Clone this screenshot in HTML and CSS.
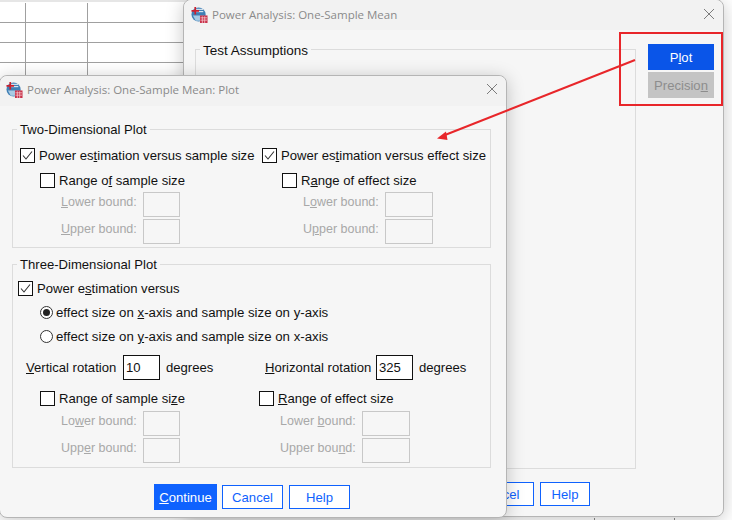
FILE: index.html
```html
<!DOCTYPE html>
<html lang="en">
<head>
    <meta charset="UTF-8">
    <title>Power Analysis: One-Sample Mean: Plot</title>
    <link rel="stylesheet" href="styles.css">
</head>
<body>
    <div class="sheet">
        <div class="sheet-row"><i></i><i></i></div>
        <div class="sheet-row"><i></i><i></i></div>
        <div class="sheet-row"><i></i><i></i></div>
        <div class="sheet-row"><i></i><i></i></div>
    </div>
    <div class="sheet-foot"><i></i><i></i></div>

    <!-- dialog behind -->
    <div class="dialog dialog-back">
        <div class="titlebar">
            <svg class="app-icon" viewBox="0 0 18 18"><use href="#spss"/></svg>
            <span class="title">Power Analysis: One-Sample Mean</span>
            <svg class="close" viewBox="0 0 12 12"><path d="M1 1l10 10M11 1L1 11"/></svg>
        </div>
        <div class="back-body">
            <div class="back-main">
                <div class="group back-group">
                    <span class="legend">Test Assumptions</span>
                </div>
            </div>
            <div class="side-buttons">
                <button class="btn btn-primary btn-side">P<u>l</u>ot</button>
                <button class="btn btn-off btn-side">Precisio<u>n</u></button>
            </div>
        </div>
        <div class="back-footer">
            <button class="btn btn-outline btn-cancel-back">Cancel</button>
            <button class="btn btn-outline btn-help-back">Help</button>
        </div>
    </div>

    <!-- plot dialog -->
    <div class="dialog dialog-front">
        <div class="titlebar">
            <svg class="app-icon" viewBox="0 0 18 18">
                <defs>
                    <g id="spss">
                        <circle cx="8" cy="9" r="7.5" fill="#3f7fb5"/>
                        <path d="M2 10h12v5.5H5z" fill="#a9cbe4"/>
                        <path d="M5 3.5h8M5 6h8" stroke="#fff" stroke-width="1"/>
                        <path d="M0.5 5.2h8M4.5 1v8" stroke="#c8202f" stroke-width="1.8"/>
                        <rect x="9.5" y="10" width="8" height="8" fill="#c8324a"/>
                        <path d="M10 12.5h7M10 15h7M12 11v7M14.5 11v7" stroke="#f4c8cf" stroke-width="0.8"/>
                    </g>
                </defs>
                <use href="#spss"/>
            </svg>
            <span class="title">Power Analysis: One-Sample Mean: Plot</span>
            <svg class="close" viewBox="0 0 12 12"><path d="M1 1l10 10M11 1L1 11"/></svg>
        </div>
        <div class="plot-body">
            <div class="group group-2d">
                <span class="legend">Two-Dimensional Plot</span>
                <div class="cols">
                    <div class="col col-a">
                        <label class="check"><span class="box"><svg viewBox="0 0 13 13"><path d="M2 6.5l3 3.5 6-7.5"/></svg></span><span>Power es<u>t</u>imation versus sample size</span></label>
                        <label class="check sub"><span class="box"></span><span>Range o<u>f</u> sample size</span></label>
                        <div class="bound"><span class="muted"><u>L</u>ower bound:</span><span class="field"></span></div>
                        <div class="bound"><span class="muted"><u>U</u>pper bound:</span><span class="field"></span></div>
                    </div>
                    <div class="col col-b">
                        <label class="check"><span class="box"><svg viewBox="0 0 13 13"><path d="M2 6.5l3 3.5 6-7.5"/></svg></span><span>Power es<u>t</u>imation versus effect size</span></label>
                        <label class="check sub"><span class="box"></span><span>R<u>a</u>nge of effect size</span></label>
                        <div class="bound"><span class="muted">L<u>o</u>wer bound:</span><span class="field wide"></span></div>
                        <div class="bound"><span class="muted">U<u>p</u>per bound:</span><span class="field wide"></span></div>
                    </div>
                </div>
            </div>

            <div class="group group-3d">
                <span class="legend">Three-Dimensional Plot</span>
                <label class="check"><span class="box"><svg viewBox="0 0 13 13"><path d="M2 6.5l3 3.5 6-7.5"/></svg></span><span>Power e<u>s</u>timation versus</span></label>
                <label class="radio"><span class="dot on"></span><span>effect size on <u>x</u>-axis and sample size on y-axis</span></label>
                <label class="radio"><span class="dot"></span><span>effect size on <u>y</u>-axis and sample size on x-axis</span></label>
                <div class="rotation">
                    <div class="rot rot-v"><span class="rot-label"><u>V</u>ertical rotation</span><span class="field solid">10</span><span class="rot-unit">degrees</span></div>
                    <div class="rot rot-h"><span class="rot-label"><u>H</u>orizontal rotation</span><span class="field solid">325</span><span class="rot-unit">degrees</span></div>
                </div>
                <div class="cols cols-3d">
                    <div class="col col-c">
                        <label class="check sub"><span class="box"></span><span>Range of sample si<u>z</u>e</span></label>
                        <div class="bound"><span class="muted">Lo<u>w</u>er bound:</span><span class="field"></span></div>
                        <div class="bound"><span class="muted">Upp<u>e</u>r bound:</span><span class="field"></span></div>
                    </div>
                    <div class="col col-d">
                        <label class="check sub"><span class="box"></span><span><u>R</u>ange of effect size</span></label>
                        <div class="bound"><span class="muted">Lower <u>b</u>ound:</span><span class="field wide"></span></div>
                        <div class="bound"><span class="muted">Upper bou<u>n</u>d:</span><span class="field wide"></span></div>
                    </div>
                </div>
            </div>

            <div class="footer">
                <button class="btn btn-primary btn-continue"><u>C</u>ontinue</button>
                <button class="btn btn-outline btn-cancel">Cancel</button>
                <button class="btn btn-outline btn-help">Help</button>
            </div>
        </div>
    </div>

    <!-- red annotation on top -->
    <div class="callout"></div>
    <svg class="arrow" viewBox="0 0 732 520">
        <path d="M635 60L445 135" stroke="#e8262a" stroke-width="2" fill="none"/>
        <path d="M437 138.500L446 131.500L447.500 140z" fill="#e8262a"/>
    </svg>
</body>
</html>
```

FILE: styles.css
```css
*{
    margin: 0;
    padding: 0;
    box-sizing: border-box;
}
html, body{
    width: 732px;
    height: 520px;
    overflow: hidden;
    background: #ffffff;
}
body{
    position: relative;
    font-family: "Liberation Sans", Arial, sans-serif;
    font-size: 13.1px;
    color: #111111;
}
u{
    text-underline-offset: 1px;
}

/* spreadsheet behind the dialogs */
.sheet{
    width: 200px;
    padding-top: 1px;
    border-top: 2px solid #e6e6e6;
}
.sheet-row{
    display: flex;
    height: 20px;
    border-bottom: 1px solid #a0a0a0;
}
.sheet-row i{
    display: block;
    width: 62px;
    border-right: 1px solid #a0a0a0;
}
.sheet-row i:first-child{
    width: 26px;
}
.sheet-foot{
    display: flex;
    gap: 79px;
    height: 2px;
    margin-top: 435px;
    padding-left: 594px;
}
.sheet-foot i{
    display: block;
    width: 1px;
    background: #8a8a8a;
}

/* dialogs are windows on a desktop */
.dialog{
    position: absolute;
    background: #f6f6f6;
    border: 1px solid #b5b5b5;
    border-radius: 8px;
    box-shadow: 0 3px 18px rgba(0,0,0,0.22);
}
.dialog-back{
    left: 183px;
    top: -1px;
    width: 541px;
    height: 518px;
}
.dialog-front{
    left: -1px;
    top: 75px;
    width: 508px;
    height: 443px;
}
.titlebar{
    display: flex;
    align-items: center;
    height: 30px;
    padding: 0 8px 2px 7px;
    background: #f2f2f2;
    border-radius: 8px 8px 0 0;
}
.dialog-front .titlebar{
    padding: 0 8px 4px 6px;
}
.app-icon{
    width: 17px;
    height: 17px;
    flex: none;
}
.title{
    flex: 1;
    margin-left: 4px;
    font-family: "Open Sans", sans-serif;
    font-size: 11.5px;
    color: #8a8a8a;
}
.close{
    width: 12px;
    height: 12px;
}
.close path{
    stroke: #7c7c7c;
    stroke-width: 1;
    fill: none;
}

/* back dialog */
.back-body{
    display: flex;
    padding: 14px 9px 0 11px;
}
.back-main{
    flex: 1;
    padding-top: 5px;
}
.back-group{
    width: 441px;
    height: 420px;
}
.back-group .legend{
    top: -8px;
    font-size: 13.5px;
}
.side-buttons{
    display: flex;
    flex-direction: column;
    gap: 2px;
}
.back-footer{
    display: flex;
    justify-content: flex-end;
    gap: 6px;
    margin-top: 13px;
    padding-right: 133px;
}

/* buttons */
.btn{
    font-family: "Liberation Sans", Arial, sans-serif;
    font-size: 13.1px;
    height: 26px;
    border: 0;
    background: none;
}
.btn-primary{
    background: #0f62fe;
    color: #ffffff;
}
.btn-side.btn-primary{
    background: #0a55e8;
}
.btn-off{
    background: #c4c4c4;
    color: #8d8d8d;
}
.btn-outline{
    height: 24px;
    background: #ffffff;
    border: 1px solid #0f62fe;
    color: #0f62fe;
}
.btn-side{
    width: 66px;
}
.btn-cancel-back{
    width: 70px;
}
.btn-help-back{
    width: 50px;
}

/* group boxes */
.group{
    position: relative;
    border: 1px solid #dcdcdc;
}
.legend{
    position: absolute;
    top: -9px;
    left: 4px;
    padding: 0 3px;
    background: #f6f6f6;
    white-space: nowrap;
    line-height: 18px;
}
.plot-body{
    padding: 23px 15px 0 12px;
}
.group-2d{
    height: 119px;
    padding: 17px 0 0 7px;
}
.group-3d{
    height: 204px;
    margin-top: 16px;
    padding: 15px 0 0 5px;
}
.cols{
    display: flex;
}
.col-a{
    width: 242px;
}
.col-c{
    width: 241px;
    padding-left: 22px;
}

/* controls */
.check, .radio{
    display: flex;
    align-items: center;
    height: 17px;
    white-space: nowrap;
}
.box{
    display: flex;
    width: 15px;
    height: 15px;
    margin-right: 4px;
    background: #ffffff;
    border: 1px solid #111111;
    flex: none;
}
.box svg{
    width: 13px;
    height: 13px;
}
.box path{
    stroke: #333333;
    stroke-width: 1.1;
    fill: none;
}
.check.sub{
    margin: 8px 0 3px 20px;
}
.cols-3d .check.sub{
    margin: 0 0 4px;
}
.bound{
    display: flex;
    height: 25px;
    margin-bottom: 2px;
    margin-left: 41px;
}
.cols-3d .bound{
    margin-left: 21px;
}
.muted{
    width: 82px;
    padding-top: 3px;
    font-size: 12.5px;
    color: #a8a8a8;
}
.field{
    display: block;
    width: 37px;
    height: 25px;
    border: 1px solid #c8c8c8;
}
.field.wide{
    width: 48px;
}
.field.solid{
    padding-left: 2px;
    border-color: #111111;
    background: #ffffff;
    line-height: 23px;
}
.radio{
    margin: 7px 0 0 22px;
    gap: 3px;
    font-size: 13.25px;
}
.check + .radio{
    margin-top: 7px;
}
.dot{
    position: relative;
    width: 13px;
    height: 13px;
    border: 1px solid #333333;
    border-radius: 50%;
    background: #ffffff;
}
.dot.on::after{
    content: "";
    position: absolute;
    left: 2px;
    top: 2px;
    width: 7px;
    height: 7px;
    border-radius: 50%;
    background: #222222;
}
.rotation{
    display: flex;
    margin-top: 10px;
    padding-left: 8px;
}
.rot{
    display: flex;
    align-items: center;
}
.rot-v{
    width: 239px;
}
.rot-v .rot-label{
    width: 97px;
}
.rot-h .rot-label{
    width: 111px;
}
.rot-unit{
    margin-left: 6px;
}
.cols-3d{
    margin-top: 10px;
}
.footer{
    display: flex;
    align-items: center;
    gap: 6px;
    margin-top: 16px;
    padding-left: 142px;
}
.btn-continue{
    width: 63px;
    margin-right: -1px;
}
.btn-cancel, .btn-help{
    width: 61px;
}

/* red annotation */
.callout{
    position: absolute;
    left: 619px;
    top: 32px;
    width: 104px;
    height: 74px;
    border: 2px solid #e8262a;
}
.arrow{
    position: absolute;
    left: 0;
    top: 0;
    width: 732px;
    height: 520px;
}
```
